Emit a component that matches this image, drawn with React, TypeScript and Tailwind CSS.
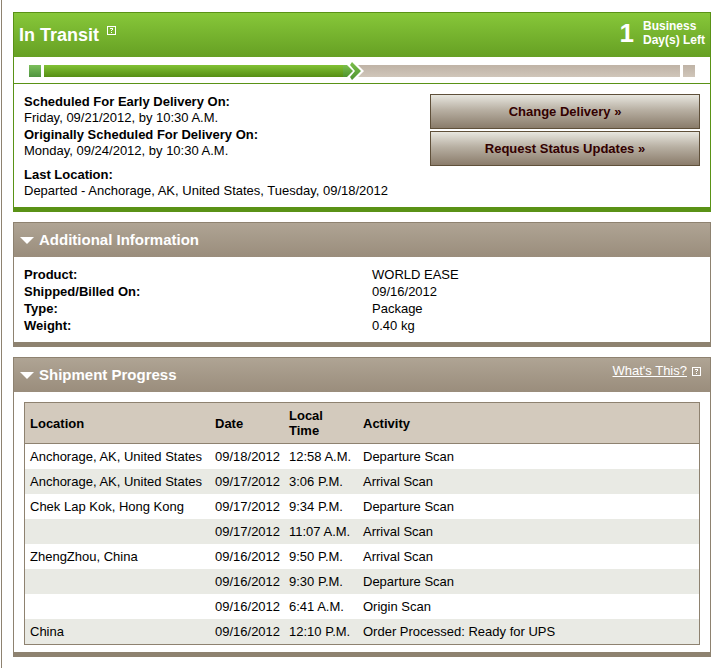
import type { ReactNode } from 'react';

const details = [
  { label: 'Product:', value: 'WORLD EASE' },
  { label: 'Shipped/Billed On:', value: '09/16/2012' },
  { label: 'Type:', value: 'Package' },
  { label: 'Weight:', value: '0.40 kg' },
];

const scans = [
  { location: 'Anchorage, AK, United States', date: '09/18/2012', time: '12:58 A.M.', activity: 'Departure Scan' },
  { location: 'Anchorage, AK, United States', date: '09/17/2012', time: '3:06 P.M.', activity: 'Arrival Scan' },
  { location: 'Chek Lap Kok, Hong Kong', date: '09/17/2012', time: '9:34 P.M.', activity: 'Departure Scan' },
  { location: '', date: '09/17/2012', time: '11:07 A.M.', activity: 'Arrival Scan' },
  { location: 'ZhengZhou, China', date: '09/16/2012', time: '9:50 P.M.', activity: 'Arrival Scan' },
  { location: '', date: '09/16/2012', time: '9:30 P.M.', activity: 'Departure Scan' },
  { location: '', date: '09/16/2012', time: '6:41 A.M.', activity: 'Origin Scan' },
  { location: 'China', date: '09/16/2012', time: '12:10 P.M.', activity: 'Order Processed: Ready for UPS' },
];

function HelpIcon() {
  return (
    <svg className="w-[9px] h-[9px]" viewBox="0 0 9 9" fill="white" shapeRendering="crispEdges" aria-hidden="true">
      <path fillRule="evenodd" d="M0 0h9v9H0zM1 1v7h7V1z" />
      <path d="M3 2h3v2H5V3H3zM4 4h1v1H4zM4 6h1v1H4z" />
    </svg>
  );
}

function ProgressBar() {
  return (
    <div className="flex items-center h-[27px] pt-[2px] px-[15px] border-b border-[#5a9216]">
      <div className="w-3 h-3 mr-[3px] bg-linear-to-b from-[#7cbf5c] to-[#4f9440]" />
      <div className="w-[45%] h-3 bg-linear-to-b from-[#82c234] to-[#568f14]" />
      <svg className="w-[21px] h-[18px] shrink-0 -ml-px" viewBox="0 0 21 18" aria-hidden="true">
        <defs>
          <linearGradient id="done" x1="0" y1="0" x2="0" y2="1">
            <stop offset="0" stopColor="#7cbf4c" />
            <stop offset="1" stopColor="#4f9430" />
          </linearGradient>
          <linearGradient id="track" x1="0" y1="0" x2="0" y2="1">
            <stop offset="0" stopColor="#bfb3a6" />
            <stop offset="1" stopColor="#d0c6ba" />
          </linearGradient>
        </defs>
        <path d="M0 3h4l6 6-6 6H0z" fill="url(#done)" />
        <path d="M15 3h6v12h-6l6-6z" fill="url(#track)" />
        <path d="M9 0l9 9-9 9-2-3 5-6-5-6z" fill="url(#done)" />
      </svg>
      <div className="grow h-3 bg-linear-to-b from-[#bfb3a6] to-[#d0c6ba]" />
      <div className="w-3 h-3 ml-[3px] bg-linear-to-b from-[#bfb3a6] to-[#d0c6ba]" />
    </div>
  );
}

function ActionButton({ children }: { children: ReactNode }) {
  return (
    <button
      type="button"
      className="h-[35px] border border-[#5f503a] bg-linear-to-b from-[#e8e7e0] via-[#b8b0a3] via-45% to-[#8a7c6b] font-bold text-[#330000]"
    >
      {children}
    </button>
  );
}

function Panel({ title, action, children }: { title: string; action?: ReactNode; children: ReactNode }) {
  return (
    <section className="border border-b-[5px] border-[#8e8270]">
      <header className="flex justify-between h-[34px] pl-[6px] pr-[9px] bg-linear-to-b from-[#afa494] to-[#9a8d7c] text-white">
        <h2 className="flex items-center gap-[5px] text-[15px] font-bold">
          <svg className="w-[14px] h-[8px]" viewBox="0 0 14 8" fill="white" aria-hidden="true">
            <path d="M0 1h14L7 8z" />
          </svg>
          {title}
        </h2>
        {action}
      </header>
      {children}
    </section>
  );
}

export default function App() {
  return (
    <div className="ml-px border-l border-[#8e8270] bg-white pt-3 pl-[11px] pr-2 pb-[11px] font-['Liberation_Sans',Arial,sans-serif] text-[13px] leading-4 text-black">
      <main className="flex flex-col gap-[10px]">
        <section className="border border-b-[5px] border-[#5a9216]">
          <header className="flex justify-between h-11 px-[5px] bg-linear-to-b from-[#87c739] to-[#66a023] font-bold text-white">
            <div className="flex items-center gap-2">
              <h1 className="text-[18px] leading-5">In Transit</h1>
              <button type="button" aria-label="About this status" className="mb-[10px]">
                <HelpIcon />
              </button>
            </div>
            <p className="flex items-center gap-[9px] pb-1">
              <span className="text-[26px]">1</span>
              <span className="text-[12px] leading-[14px]">
                Business
                <br />
                Day(s) Left
              </span>
            </p>
          </header>
          <ProgressBar />
          <div className="flex justify-between pt-[10px] pr-[10px] pb-2 pl-[10px]">
            <dl>
              <dt className="font-bold">Scheduled For Early Delivery On:</dt>
              <dd>Friday, 09/21/2012, by 10:30 A.M.</dd>
              <dt className="font-bold mt-px">Originally Scheduled For Delivery On:</dt>
              <dd>Monday, 09/24/2012, by 10:30 A.M.</dd>
              <dt className="font-bold mt-2">Last Location:</dt>
              <dd>Departed - Anchorage, AK, United States, Tuesday, 09/18/2012</dd>
            </dl>
            <div className="flex flex-col gap-[2px] w-[270px]">
              <ActionButton>Change Delivery »</ActionButton>
              <ActionButton>Request Status Updates »</ActionButton>
            </div>
          </div>
        </section>

        <Panel title="Additional Information">
          <dl className="grid grid-cols-2 gap-x-[10px] leading-[17px] pt-[9px] pb-2 pl-[10px]">
            {details.map((item) => (
              <div key={item.label} className="contents">
                <dt className="font-bold">{item.label}</dt>
                <dd>{item.value}</dd>
              </div>
            ))}
          </dl>
        </Panel>

        <Panel
          title="Shipment Progress"
          action={
            <a href="#help" className="flex items-center gap-[5px] mb-2">
              <span className="underline">What's This?</span>
              <HelpIcon />
            </a>
          }
        >
          <div className="pt-[10px] px-[10px] pb-[7px]">
            <table className="w-full table-fixed border-separate border-spacing-0 border border-[#8e8270] text-left">
              <thead>
                <tr className="h-[41px] bg-[#d3cabd] leading-[15px]">
                  <th className="w-[185px] px-[5px] border-b border-[#8e8270]">Location</th>
                  <th className="w-[74px] px-[5px] border-b border-[#8e8270]">Date</th>
                  <th className="w-[74px] px-[5px] border-b border-[#8e8270]">Local Time</th>
                  <th className="px-[5px] border-b border-[#8e8270]">Activity</th>
                </tr>
              </thead>
              <tbody>
                {scans.map((scan) => (
                  <tr key={`${scan.date} ${scan.time}`} className="h-[25px] even:bg-[#e9eae4] whitespace-nowrap">
                    <td className="px-[5px]">{scan.location}</td>
                    <td className="px-[5px]">{scan.date}</td>
                    <td className="px-[5px]">{scan.time}</td>
                    <td className="px-[5px]">{scan.activity}</td>
                  </tr>
                ))}
              </tbody>
            </table>
          </div>
        </Panel>
      </main>
    </div>
  );
}
